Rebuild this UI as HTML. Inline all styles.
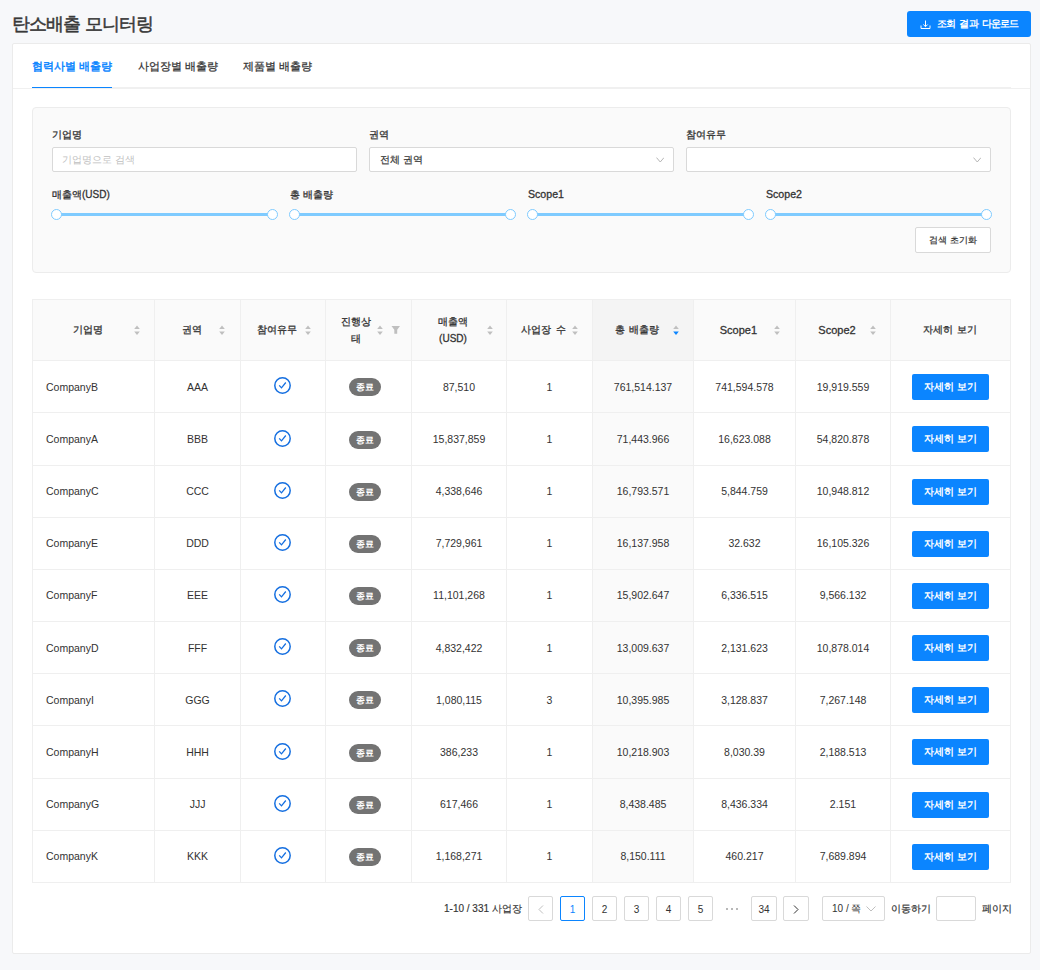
<!DOCTYPE html>
<html lang="ko">
<head>
<meta charset="utf-8">
<style>
*{box-sizing:border-box;margin:0;padding:0}
html,body{width:1040px;height:970px;overflow:hidden}
body{background:#f7f8fa;font-family:"Liberation Sans",sans-serif;color:#333;position:relative;font-size:11px}
.abs{position:absolute}
.title{left:12px;top:10.5px;font-size:17.5px;font-weight:normal;-webkit-text-stroke:0.5px currentColor;color:#383838;letter-spacing:-1.1px;word-spacing:1.5px;line-height:26px;white-space:nowrap}
.dl{left:907px;top:11px;width:124px;height:26px;background:#0b85ff;border-radius:3px;color:#fff;font-size:9.6px;font-weight:bold;letter-spacing:-0.9px;word-spacing:2.5px;line-height:26px;white-space:nowrap}
.card{left:12px;top:43px;width:1019px;height:911px;background:#fff;border:1px solid #ebebeb;border-radius:2px}
.tabline{left:13px;top:88px;width:1017px;height:1px;background:#f0f0f0}
.tabline2{left:112px;top:87px;width:899px;height:1px;background:#f0f0f0}
.tab{top:58px;font-size:11px;line-height:16px;white-space:nowrap;color:#333;-webkit-text-stroke:0.25px currentColor}
.ink{left:32px;top:86.5px;width:80px;height:1.5px;background:#0b85ff}
.filter{left:32px;top:107px;width:979px;height:166px;background:#fafafa;border:1px solid #ececec;border-radius:4px}
.lbl{font-size:10px;font-weight:normal;-webkit-text-stroke:0.3px currentColor;line-height:14px;white-space:nowrap;color:#333}
.inp{height:25px;background:#fff;border:1px solid #d9d9d9;border-radius:2px}
.ph{position:absolute;left:9px;top:5px;font-size:9.5px;line-height:14px;color:#bfbfbf;white-space:nowrap}
.val{position:absolute;left:10px;top:5px;font-size:10px;line-height:14px;color:#333;white-space:nowrap;-webkit-text-stroke:0.2px currentColor}
.arrow{position:absolute;right:9px;top:8.5px;width:8.5px;height:6px}
.rail{height:3px;background:#7fcbff}
.handle{width:11px;height:11px;border:1.5px solid #7fcbff;border-radius:50%;background:#fff}
.btn{background:#fff;border:1px solid #d9d9d9;border-radius:2px;font-size:11px;line-height:14px;text-align:center;white-space:nowrap;-webkit-text-stroke:0.2px currentColor}
.hl{left:32px;width:979px;height:1px;background:#efefef}
.vl{top:299px;width:1px;height:584px;background:#efefef}
.th{font-size:10px;font-weight:normal;-webkit-text-stroke:0.3px currentColor;word-spacing:1.5px;line-height:14px;text-align:center;white-space:nowrap;color:#333}
.th2{line-height:17px}
.td{display:flex;align-items:center;justify-content:center;font-size:10.5px;color:#333;white-space:nowrap}
.tdt{padding-bottom:1px}
.tdl{justify-content:flex-start;padding-left:13px}
.tag{display:inline-block;width:32px;height:18px;line-height:18px;border-radius:9px;background:#737373;color:#fff;font-size:9px;font-weight:bold;text-align:center;margin-top:1px;margin-right:7px}
.vbtn{display:inline-block;width:77px;height:26px;line-height:26px;background:#0b85ff;color:#fff;border-radius:2px;font-size:10px;font-weight:bold;text-align:center}
.pg{top:896px;width:25px;height:25px;border:1px solid #d9d9d9;border-radius:2px;background:#fff;font-size:10px;line-height:25px;text-align:center;color:#333}
</style>
</head>
<body>
<div class="abs title">탄소배출 모니터링</div>
<div class="abs dl">
  <svg class="abs" style="left:13px;top:9px" width="11" height="10" viewBox="0 0 11 10"><path d="M5.5 0.5V6.5M3.3 4.5L5.5 6.7L7.7 4.5M1 5.5V8.5H10V5.5" fill="none" stroke="#fff" stroke-width="1"/></svg>
  <span class="abs" style="left:30px;top:0">조회 결과 다운로드</span>
</div>
<div class="abs card"></div>
<div class="abs tabline"></div>
<div class="abs tabline2"></div>
<div class="abs tab" style="left:32px;color:#0b85ff;-webkit-text-stroke:0.45px #0b85ff">협력사별 배출량</div>
<div class="abs tab" style="left:138px">사업장별 배출량</div>
<div class="abs tab" style="left:243px">제품별 배출량</div>
<div class="abs ink"></div>

<div class="abs filter"></div>
<div class="abs lbl" style="left:52px;top:128px">기업명</div>
<div class="abs lbl" style="left:369px;top:128px">권역</div>
<div class="abs lbl" style="left:686px;top:128px">참여유무</div>
<div class="abs inp" style="left:52px;top:147px;width:305px"><span class="ph">기업명으로 검색</span></div>
<div class="abs inp" style="left:369px;top:147px;width:305px"><span class="val">전체 권역</span>
  <svg class="arrow" viewBox="0 0 8.5 6"><path d="M0.5 0.6L4.25 5L8 0.6" fill="none" stroke="#b5b5b5" stroke-width="1"/></svg></div>
<div class="abs inp" style="left:686px;top:147px;width:305px">
  <svg class="arrow" viewBox="0 0 8.5 6"><path d="M0.5 0.6L4.25 5L8 0.6" fill="none" stroke="#b5b5b5" stroke-width="1"/></svg></div>

<div class="abs lbl" style="left:52px;top:188px">매출액(USD)</div>
<div class="abs lbl" style="left:290px;top:188px">총 배출량</div>
<div class="abs lbl" style="left:528px;top:187px;font-size:10.6px">Scope1</div>
<div class="abs lbl" style="left:766px;top:187px;font-size:10.6px">Scope2</div>
<!-- sliders -->
<div class="abs rail" style="left:57px;top:213px;width:216px"></div>
<div class="abs handle" style="left:51px;top:209px"></div>
<div class="abs handle" style="left:267px;top:209px"></div>
<div class="abs rail" style="left:295px;top:213px;width:216px"></div>
<div class="abs handle" style="left:289px;top:209px"></div>
<div class="abs handle" style="left:505px;top:209px"></div>
<div class="abs rail" style="left:533px;top:213px;width:216px"></div>
<div class="abs handle" style="left:527px;top:209px"></div>
<div class="abs handle" style="left:743px;top:209px"></div>
<div class="abs rail" style="left:771px;top:213px;width:216px"></div>
<div class="abs handle" style="left:765px;top:209px"></div>
<div class="abs handle" style="left:981px;top:209px"></div>
<div class="abs btn" style="left:915px;top:227px;width:76px;height:26px;line-height:24px;font-size:9.3px">검색 초기화</div>

<!-- TABLE -->
<div class="abs" style="left:32px;top:299px;width:979px;height:61px;background:#fafafa"></div>
<div class="abs" style="left:593px;top:300px;width:100px;height:60px;background:#f4f4f4"></div>
<div class="abs" style="left:593px;top:361px;width:100px;height:521px;background:#fafafa"></div>
<div class="abs hl" style="top:299px"></div>
<div class="abs hl" style="top:360px"></div>
<div class="abs hl" style="top:412px"></div>
<div class="abs hl" style="top:465px"></div>
<div class="abs hl" style="top:517px"></div>
<div class="abs hl" style="top:569px"></div>
<div class="abs hl" style="top:621px"></div>
<div class="abs hl" style="top:673px"></div>
<div class="abs hl" style="top:725px"></div>
<div class="abs hl" style="top:778px"></div>
<div class="abs hl" style="top:830px"></div>
<div class="abs hl" style="top:882px"></div>
<div class="abs vl" style="left:32px"></div>
<div class="abs vl" style="left:154px"></div>
<div class="abs vl" style="left:240px"></div>
<div class="abs vl" style="left:325px"></div>
<div class="abs vl" style="left:411px"></div>
<div class="abs vl" style="left:506px"></div>
<div class="abs vl" style="left:592px"></div>
<div class="abs vl" style="left:693px"></div>
<div class="abs vl" style="left:795px"></div>
<div class="abs vl" style="left:890px"></div>
<div class="abs vl" style="left:1010px"></div>
<div class="abs th" style="left:47.5px;top:323px;width:80px">기업명</div>
<svg class="abs" style="left:133.2px;top:325px" width="8" height="11" viewBox="0 0 8 11"><path d="M4 0.5L6.8 4H1.2Z" fill="#bfbfbf"/><path d="M1.2 6.5H6.8L4 10Z" fill="#bfbfbf"/></svg>
<div class="abs th" style="left:151.5px;top:323px;width:80px">권역</div>
<svg class="abs" style="left:218.2px;top:325px" width="8" height="11" viewBox="0 0 8 11"><path d="M4 0.5L6.8 4H1.2Z" fill="#bfbfbf"/><path d="M1.2 6.5H6.8L4 10Z" fill="#bfbfbf"/></svg>
<div class="abs th" style="left:237.0px;top:323px;width:80px">참여유무</div>
<svg class="abs" style="left:304.4px;top:325px" width="8" height="11" viewBox="0 0 8 11"><path d="M4 0.5L6.8 4H1.2Z" fill="#bfbfbf"/><path d="M1.2 6.5H6.8L4 10Z" fill="#bfbfbf"/></svg>
<div class="abs th th2" style="left:316.0px;top:312.5px;width:80px">진행상<br>태</div>
<svg class="abs" style="left:376px;top:325px" width="8" height="11" viewBox="0 0 8 11"><path d="M4 0.5L6.8 4H1.2Z" fill="#bfbfbf"/><path d="M1.2 6.5H6.8L4 10Z" fill="#bfbfbf"/></svg>
<div class="abs th th2" style="left:413.0px;top:312.5px;width:80px">매출액<br>(USD)</div>
<svg class="abs" style="left:485.5px;top:325px" width="8" height="11" viewBox="0 0 8 11"><path d="M4 0.5L6.8 4H1.2Z" fill="#bfbfbf"/><path d="M1.2 6.5H6.8L4 10Z" fill="#bfbfbf"/></svg>
<div class="abs th" style="left:503.6px;top:323px;width:80px">사업장 수</div>
<svg class="abs" style="left:570.5px;top:325px" width="8" height="11" viewBox="0 0 8 11"><path d="M4 0.5L6.8 4H1.2Z" fill="#bfbfbf"/><path d="M1.2 6.5H6.8L4 10Z" fill="#bfbfbf"/></svg>
<div class="abs th" style="left:597.0px;top:323px;width:80px">총 배출량</div>
<svg class="abs" style="left:672.3px;top:325px" width="8" height="11" viewBox="0 0 8 11"><path d="M4 0.5L6.8 4H1.2Z" fill="#bfbfbf"/><path d="M1.2 6.5H6.8L4 10Z" fill="#0b85ff"/></svg>
<div class="abs th" style="left:698.4px;top:323px;width:80px"><span style="font-size:11px">Scope1</span></div>
<svg class="abs" style="left:773.2px;top:325px" width="8" height="11" viewBox="0 0 8 11"><path d="M4 0.5L6.8 4H1.2Z" fill="#bfbfbf"/><path d="M1.2 6.5H6.8L4 10Z" fill="#bfbfbf"/></svg>
<div class="abs th" style="left:797.0px;top:323px;width:80px"><span style="font-size:11px">Scope2</span></div>
<svg class="abs" style="left:869px;top:325px" width="8" height="11" viewBox="0 0 8 11"><path d="M4 0.5L6.8 4H1.2Z" fill="#bfbfbf"/><path d="M1.2 6.5H6.8L4 10Z" fill="#bfbfbf"/></svg>
<div class="abs th" style="left:910.3px;top:323px;width:80px">자세히 보기</div>
<svg class="abs" style="left:391px;top:325px" width="10" height="10" viewBox="0 0 10 10"><path d="M0.5 0.9H9L6.2 4.8V8.7H3.3V4.8Z" fill="#bfbfbf"/></svg>
<div class="abs td tdl" style="left:33px;top:361px;width:121px;height:51px">CompanyB</div>
<div class="abs td" style="left:155px;top:361px;width:85px;height:51px">AAA</div>
<div class="abs td" style="left:241px;top:361px;width:84px;height:51px"><svg width="17" height="17" viewBox="0 0 17 17" style="margin:0 1px 2px 0"><circle cx="8.5" cy="8.5" r="7.7" fill="none" stroke="#156fe0" stroke-width="1.5"/><path d="M5.2 8.3L7.5 10.9L11.8 5.5" fill="none" stroke="#156fe0" stroke-width="1.25" stroke-linecap="butt" stroke-linejoin="miter"/></svg></div>
<div class="abs td" style="left:326px;top:361px;width:85px;height:51px"><span class="tag">종료</span></div>
<div class="abs td" style="left:412px;top:361px;width:94px;height:51px">87,510</div>
<div class="abs td" style="left:507px;top:361px;width:85px;height:51px">1</div>
<div class="abs td" style="left:593px;top:361px;width:100px;height:51px">761,514.137</div>
<div class="abs td" style="left:694px;top:361px;width:101px;height:51px">741,594.578</div>
<div class="abs td" style="left:796px;top:361px;width:94px;height:51px">19,919.559</div>
<div class="abs td" style="left:891px;top:361px;width:119px;height:51px"><span class="vbtn">자세히 보기</span></div>
<div class="abs td tdl" style="left:33px;top:413px;width:121px;height:52px">CompanyA</div>
<div class="abs td" style="left:155px;top:413px;width:85px;height:52px">BBB</div>
<div class="abs td" style="left:241px;top:413px;width:84px;height:52px"><svg width="17" height="17" viewBox="0 0 17 17" style="margin:0 1px 2px 0"><circle cx="8.5" cy="8.5" r="7.7" fill="none" stroke="#156fe0" stroke-width="1.5"/><path d="M5.2 8.3L7.5 10.9L11.8 5.5" fill="none" stroke="#156fe0" stroke-width="1.25" stroke-linecap="butt" stroke-linejoin="miter"/></svg></div>
<div class="abs td" style="left:326px;top:413px;width:85px;height:52px"><span class="tag">종료</span></div>
<div class="abs td" style="left:412px;top:413px;width:94px;height:52px">15,837,859</div>
<div class="abs td" style="left:507px;top:413px;width:85px;height:52px">1</div>
<div class="abs td" style="left:593px;top:413px;width:100px;height:52px">71,443.966</div>
<div class="abs td" style="left:694px;top:413px;width:101px;height:52px">16,623.088</div>
<div class="abs td" style="left:796px;top:413px;width:94px;height:52px">54,820.878</div>
<div class="abs td" style="left:891px;top:413px;width:119px;height:52px"><span class="vbtn">자세히 보기</span></div>
<div class="abs td tdl tdt" style="left:33px;top:466px;width:121px;height:51px">CompanyC</div>
<div class="abs td tdt" style="left:155px;top:466px;width:85px;height:51px">CCC</div>
<div class="abs td" style="left:241px;top:466px;width:84px;height:51px"><svg width="17" height="17" viewBox="0 0 17 17" style="margin:0 1px 2px 0"><circle cx="8.5" cy="8.5" r="7.7" fill="none" stroke="#156fe0" stroke-width="1.5"/><path d="M5.2 8.3L7.5 10.9L11.8 5.5" fill="none" stroke="#156fe0" stroke-width="1.25" stroke-linecap="butt" stroke-linejoin="miter"/></svg></div>
<div class="abs td" style="left:326px;top:466px;width:85px;height:51px"><span class="tag">종료</span></div>
<div class="abs td tdt" style="left:412px;top:466px;width:94px;height:51px">4,338,646</div>
<div class="abs td tdt" style="left:507px;top:466px;width:85px;height:51px">1</div>
<div class="abs td tdt" style="left:593px;top:466px;width:100px;height:51px">16,793.571</div>
<div class="abs td tdt" style="left:694px;top:466px;width:101px;height:51px">5,844.759</div>
<div class="abs td tdt" style="left:796px;top:466px;width:94px;height:51px">10,948.812</div>
<div class="abs td" style="left:891px;top:466px;width:119px;height:51px"><span class="vbtn">자세히 보기</span></div>
<div class="abs td tdl tdt" style="left:33px;top:518px;width:121px;height:51px">CompanyE</div>
<div class="abs td tdt" style="left:155px;top:518px;width:85px;height:51px">DDD</div>
<div class="abs td" style="left:241px;top:518px;width:84px;height:51px"><svg width="17" height="17" viewBox="0 0 17 17" style="margin:0 1px 2px 0"><circle cx="8.5" cy="8.5" r="7.7" fill="none" stroke="#156fe0" stroke-width="1.5"/><path d="M5.2 8.3L7.5 10.9L11.8 5.5" fill="none" stroke="#156fe0" stroke-width="1.25" stroke-linecap="butt" stroke-linejoin="miter"/></svg></div>
<div class="abs td" style="left:326px;top:518px;width:85px;height:51px"><span class="tag">종료</span></div>
<div class="abs td tdt" style="left:412px;top:518px;width:94px;height:51px">7,729,961</div>
<div class="abs td tdt" style="left:507px;top:518px;width:85px;height:51px">1</div>
<div class="abs td tdt" style="left:593px;top:518px;width:100px;height:51px">16,137.958</div>
<div class="abs td tdt" style="left:694px;top:518px;width:101px;height:51px">32.632</div>
<div class="abs td tdt" style="left:796px;top:518px;width:94px;height:51px">16,105.326</div>
<div class="abs td" style="left:891px;top:518px;width:119px;height:51px"><span class="vbtn">자세히 보기</span></div>
<div class="abs td tdl tdt" style="left:33px;top:570px;width:121px;height:51px">CompanyF</div>
<div class="abs td tdt" style="left:155px;top:570px;width:85px;height:51px">EEE</div>
<div class="abs td" style="left:241px;top:570px;width:84px;height:51px"><svg width="17" height="17" viewBox="0 0 17 17" style="margin:0 1px 2px 0"><circle cx="8.5" cy="8.5" r="7.7" fill="none" stroke="#156fe0" stroke-width="1.5"/><path d="M5.2 8.3L7.5 10.9L11.8 5.5" fill="none" stroke="#156fe0" stroke-width="1.25" stroke-linecap="butt" stroke-linejoin="miter"/></svg></div>
<div class="abs td" style="left:326px;top:570px;width:85px;height:51px"><span class="tag">종료</span></div>
<div class="abs td tdt" style="left:412px;top:570px;width:94px;height:51px">11,101,268</div>
<div class="abs td tdt" style="left:507px;top:570px;width:85px;height:51px">1</div>
<div class="abs td tdt" style="left:593px;top:570px;width:100px;height:51px">15,902.647</div>
<div class="abs td tdt" style="left:694px;top:570px;width:101px;height:51px">6,336.515</div>
<div class="abs td tdt" style="left:796px;top:570px;width:94px;height:51px">9,566.132</div>
<div class="abs td" style="left:891px;top:570px;width:119px;height:51px"><span class="vbtn">자세히 보기</span></div>
<div class="abs td tdl" style="left:33px;top:622px;width:121px;height:51px">CompanyD</div>
<div class="abs td" style="left:155px;top:622px;width:85px;height:51px">FFF</div>
<div class="abs td" style="left:241px;top:622px;width:84px;height:51px"><svg width="17" height="17" viewBox="0 0 17 17" style="margin:0 1px 2px 0"><circle cx="8.5" cy="8.5" r="7.7" fill="none" stroke="#156fe0" stroke-width="1.5"/><path d="M5.2 8.3L7.5 10.9L11.8 5.5" fill="none" stroke="#156fe0" stroke-width="1.25" stroke-linecap="butt" stroke-linejoin="miter"/></svg></div>
<div class="abs td" style="left:326px;top:622px;width:85px;height:51px"><span class="tag">종료</span></div>
<div class="abs td" style="left:412px;top:622px;width:94px;height:51px">4,832,422</div>
<div class="abs td" style="left:507px;top:622px;width:85px;height:51px">1</div>
<div class="abs td" style="left:593px;top:622px;width:100px;height:51px">13,009.637</div>
<div class="abs td" style="left:694px;top:622px;width:101px;height:51px">2,131.623</div>
<div class="abs td" style="left:796px;top:622px;width:94px;height:51px">10,878.014</div>
<div class="abs td" style="left:891px;top:622px;width:119px;height:51px"><span class="vbtn">자세히 보기</span></div>
<div class="abs td tdl" style="left:33px;top:674px;width:121px;height:51px">CompanyI</div>
<div class="abs td" style="left:155px;top:674px;width:85px;height:51px">GGG</div>
<div class="abs td" style="left:241px;top:674px;width:84px;height:51px"><svg width="17" height="17" viewBox="0 0 17 17" style="margin:0 1px 2px 0"><circle cx="8.5" cy="8.5" r="7.7" fill="none" stroke="#156fe0" stroke-width="1.5"/><path d="M5.2 8.3L7.5 10.9L11.8 5.5" fill="none" stroke="#156fe0" stroke-width="1.25" stroke-linecap="butt" stroke-linejoin="miter"/></svg></div>
<div class="abs td" style="left:326px;top:674px;width:85px;height:51px"><span class="tag">종료</span></div>
<div class="abs td" style="left:412px;top:674px;width:94px;height:51px">1,080,115</div>
<div class="abs td" style="left:507px;top:674px;width:85px;height:51px">3</div>
<div class="abs td" style="left:593px;top:674px;width:100px;height:51px">10,395.985</div>
<div class="abs td" style="left:694px;top:674px;width:101px;height:51px">3,128.837</div>
<div class="abs td" style="left:796px;top:674px;width:94px;height:51px">7,267.148</div>
<div class="abs td" style="left:891px;top:674px;width:119px;height:51px"><span class="vbtn">자세히 보기</span></div>
<div class="abs td tdl" style="left:33px;top:726px;width:121px;height:52px">CompanyH</div>
<div class="abs td" style="left:155px;top:726px;width:85px;height:52px">HHH</div>
<div class="abs td" style="left:241px;top:726px;width:84px;height:52px"><svg width="17" height="17" viewBox="0 0 17 17" style="margin:0 1px 2px 0"><circle cx="8.5" cy="8.5" r="7.7" fill="none" stroke="#156fe0" stroke-width="1.5"/><path d="M5.2 8.3L7.5 10.9L11.8 5.5" fill="none" stroke="#156fe0" stroke-width="1.25" stroke-linecap="butt" stroke-linejoin="miter"/></svg></div>
<div class="abs td" style="left:326px;top:726px;width:85px;height:52px"><span class="tag">종료</span></div>
<div class="abs td" style="left:412px;top:726px;width:94px;height:52px">386,233</div>
<div class="abs td" style="left:507px;top:726px;width:85px;height:52px">1</div>
<div class="abs td" style="left:593px;top:726px;width:100px;height:52px">10,218.903</div>
<div class="abs td" style="left:694px;top:726px;width:101px;height:52px">8,030.39</div>
<div class="abs td" style="left:796px;top:726px;width:94px;height:52px">2,188.513</div>
<div class="abs td" style="left:891px;top:726px;width:119px;height:52px"><span class="vbtn">자세히 보기</span></div>
<div class="abs td tdl tdt" style="left:33px;top:779px;width:121px;height:51px">CompanyG</div>
<div class="abs td tdt" style="left:155px;top:779px;width:85px;height:51px">JJJ</div>
<div class="abs td" style="left:241px;top:779px;width:84px;height:51px"><svg width="17" height="17" viewBox="0 0 17 17" style="margin:0 1px 2px 0"><circle cx="8.5" cy="8.5" r="7.7" fill="none" stroke="#156fe0" stroke-width="1.5"/><path d="M5.2 8.3L7.5 10.9L11.8 5.5" fill="none" stroke="#156fe0" stroke-width="1.25" stroke-linecap="butt" stroke-linejoin="miter"/></svg></div>
<div class="abs td" style="left:326px;top:779px;width:85px;height:51px"><span class="tag">종료</span></div>
<div class="abs td tdt" style="left:412px;top:779px;width:94px;height:51px">617,466</div>
<div class="abs td tdt" style="left:507px;top:779px;width:85px;height:51px">1</div>
<div class="abs td tdt" style="left:593px;top:779px;width:100px;height:51px">8,438.485</div>
<div class="abs td tdt" style="left:694px;top:779px;width:101px;height:51px">8,436.334</div>
<div class="abs td tdt" style="left:796px;top:779px;width:94px;height:51px">2.151</div>
<div class="abs td" style="left:891px;top:779px;width:119px;height:51px"><span class="vbtn">자세히 보기</span></div>
<div class="abs td tdl tdt" style="left:33px;top:831px;width:121px;height:51px">CompanyK</div>
<div class="abs td tdt" style="left:155px;top:831px;width:85px;height:51px">KKK</div>
<div class="abs td" style="left:241px;top:831px;width:84px;height:51px"><svg width="17" height="17" viewBox="0 0 17 17" style="margin:0 1px 2px 0"><circle cx="8.5" cy="8.5" r="7.7" fill="none" stroke="#156fe0" stroke-width="1.5"/><path d="M5.2 8.3L7.5 10.9L11.8 5.5" fill="none" stroke="#156fe0" stroke-width="1.25" stroke-linecap="butt" stroke-linejoin="miter"/></svg></div>
<div class="abs td" style="left:326px;top:831px;width:85px;height:51px"><span class="tag">종료</span></div>
<div class="abs td tdt" style="left:412px;top:831px;width:94px;height:51px">1,168,271</div>
<div class="abs td tdt" style="left:507px;top:831px;width:85px;height:51px">1</div>
<div class="abs td tdt" style="left:593px;top:831px;width:100px;height:51px">8,150.111</div>
<div class="abs td tdt" style="left:694px;top:831px;width:101px;height:51px">460.217</div>
<div class="abs td tdt" style="left:796px;top:831px;width:94px;height:51px">7,689.894</div>
<div class="abs td" style="left:891px;top:831px;width:119px;height:51px"><span class="vbtn">자세히 보기</span></div>
<!-- /TABLE -->

<!-- PAG -->
<div class="abs" style="left:444px;top:902px;font-size:10px;line-height:14px;white-space:nowrap;color:#333;-webkit-text-stroke:0.15px currentColor">1-10 / 331 사업장</div>
<div class="abs pg" style="left:528px"><svg style="position:absolute;left:9px;top:8px" width="6" height="9" viewBox="0 0 6 9"><path d="M5 0.5L1 4.5L5 8.5" fill="none" stroke="#bfbfbf" stroke-width="1"/></svg></div>
<div class="abs pg" style="left:560px;border-color:#0b85ff;color:#0b85ff">1</div>
<div class="abs pg" style="left:592px">2</div>
<div class="abs pg" style="left:624px">3</div>
<div class="abs pg" style="left:656px">4</div>
<div class="abs pg" style="left:688px">5</div>
<div class="abs" style="left:726px;top:908px;width:2px;height:2px;background:#b8b8b8"></div><div class="abs" style="left:731px;top:908px;width:2px;height:2px;background:#b8b8b8"></div><div class="abs" style="left:736px;top:908px;width:2px;height:2px;background:#b8b8b8"></div>
<div class="abs pg" style="left:751px;width:26px">34</div>
<div class="abs pg" style="left:783px;width:26px"><svg style="position:absolute;left:9px;top:8px" width="6" height="9" viewBox="0 0 6 9"><path d="M1 0.5L5 4.5L1 8.5" fill="none" stroke="#333" stroke-width="1"/></svg></div>
<div class="abs" style="left:822px;top:896px;width:63px;height:25px;border:1px solid #d9d9d9;border-radius:2px;background:#fff">
  <span class="abs" style="left:9px;top:5px;font-size:10px;line-height:14px;white-space:nowrap">10 / 쪽</span>
  <svg class="abs" style="left:43px;top:9px" width="10" height="6" viewBox="0 0 10 6"><path d="M0.5 0.5L5 5L9.5 0.5" fill="none" stroke="#bfbfbf" stroke-width="1"/></svg>
</div>
<div class="abs" style="left:891px;top:902px;font-size:10px;line-height:14px;white-space:nowrap;-webkit-text-stroke:0.2px currentColor">이동하기</div>
<div class="abs" style="left:936px;top:896px;width:40px;height:25px;border:1px solid #d9d9d9;border-radius:2px;background:#fff"></div>
<div class="abs" style="left:982px;top:902px;font-size:10px;line-height:14px;white-space:nowrap;-webkit-text-stroke:0.2px currentColor">페이지</div>
<!-- /PAG -->
</body>
</html>
